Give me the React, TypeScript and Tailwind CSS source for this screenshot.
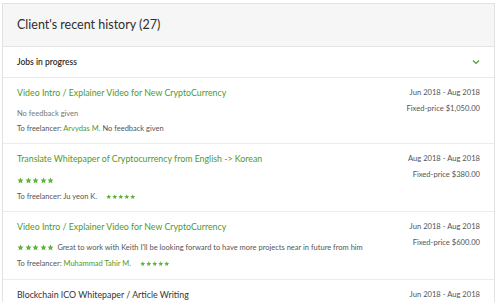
import React from "react";

const Star = ({ s }: { s: number }) => (
  <svg width={s} height={s} viewBox="0 0 24 24" className="shrink-0">
    <path
      d="M12 1.5l3.1 6.9 7.4.7-5.6 5 1.7 7.4L12 17.7l-6.6 3.8 1.7-7.4-5.6-5 7.4-.7z"
      fill="#5fb33b"
    />
  </svg>
);

const Stars = ({ s, gap }: { s: number; gap: number }) => (
  <div className="flex items-center" style={{ gap }}>
    {[0, 1, 2, 3, 4].map((i) => (
      <Star key={i} s={s} />
    ))}
  </div>
);

const Right = ({ date, price }: { date: string; price: string }) => (
  <div className="flex flex-col items-end shrink-0 text-[7.6px] text-[#555] leading-[15px] gap-[1px]">
    <div>{date}</div>
    <div>{price}</div>
  </div>
);

export default function App() {
  return (
    <div
      className="w-[500px] h-[302px] bg-white overflow-hidden pl-[2px] pt-[3px]"
      style={{ fontFamily: "Lato, 'Open Sans', sans-serif" }}
    >
      <div className="w-[493px] border border-[#e2e2e2] bg-white">
        <div className="h-[43px] bg-[#f6f6f6] flex items-center px-[14px] border-b border-[#e4e4e4]">
          <span className="text-[12.5px] text-[#2e2e2e]">Client's recent history (27)</span>
        </div>
        <div className="h-[31px] flex items-center justify-between pl-[14px] pr-[14px] border-b border-[#e8e8e8]">
          <span className="text-[8.5px] font-semibold text-[#2a2a2a]">Jobs in progress</span>
          <svg width="8" height="6" viewBox="0 0 8 6">
            <path d="M1 1.5l3 3 3-3" stroke="#4a9d2a" strokeWidth="1.2" fill="none" />
          </svg>
        </div>

        {/* Row 1 */}
        <div className="h-[66px] flex justify-between pl-[14px] pr-[14px] pt-[7px] border-b border-[#ececec]">
          <div className="flex flex-col">
            <div className="text-[8.8px] text-[#4e9a2a] leading-[15px]">
              Video Intro / Explainer Video for New CryptoCurrency
            </div>
            <div className="text-[7.5px] text-[#777] mt-[7px] leading-[13px]">No feedback given</div>
            <div className="text-[7.5px] text-[#555] mt-[2px] leading-[13px]">
              To freelancer: <span className="text-[#4e9a2a]">Arvydas M.</span> No feedback given
            </div>
          </div>
          <Right date="Jun 2018 - Aug 2018" price="Fixed-price $1,050.00" />
        </div>

        {/* Row 2 */}
        <div className="h-[68px] flex justify-between pl-[14px] pr-[14px] pt-[7px] border-b border-[#ececec]">
          <div className="flex flex-col">
            <div className="text-[8.8px] text-[#4e9a2a] leading-[15px]">
              Translate Whitepaper of Cryptocurrency from English -&gt; Korean
            </div>
            <div className="mt-[8px] h-[13px] flex items-center">
              <Stars s={7} gap={0.6} />
            </div>
            <div className="text-[7.5px] text-[#555] mt-[3px] leading-[13px] flex items-center">
              <span>To freelancer: Ju yeon K.</span>
              <span className="ml-[9px]">
                <Stars s={5.5} gap={0.4} />
              </span>
            </div>
          </div>
          <Right date="Aug 2018 - Aug 2018" price="Fixed-price $380.00" />
        </div>

        {/* Row 3 */}
        <div className="h-[68px] flex justify-between pl-[14px] pr-[14px] pt-[7px] border-b border-[#ececec]">
          <div className="flex flex-col">
            <div className="text-[8.8px] text-[#4e9a2a] leading-[15px]">
              Video Intro / Explainer Video for New CryptoCurrency
            </div>
            <div className="mt-[7px] h-[13px] flex items-center text-[7.5px] text-[#555]">
              <Stars s={7} gap={0.6} />
              <span className="ml-[3px]">
                Great to work with Keith I'll be looking forward to have more projects near in future from him
              </span>
            </div>
            <div className="text-[7.5px] text-[#555] mt-[3px] leading-[13px] flex items-center">
              <span>
                To freelancer: <span className="text-[#4e9a2a]">Muhammad Tahir M.</span>
              </span>
              <span className="ml-[9px]">
                <Stars s={5.5} gap={0.4} />
              </span>
            </div>
          </div>
          <Right date="Jun 2018 - Aug 2018" price="Fixed-price $600.00" />
        </div>

        {/* Row 4 */}
        <div className="h-[40px] flex justify-between pl-[14px] pr-[14px] pt-[7px]">
          <div className="text-[8.8px] text-[#333] leading-[15px]">
            Blockchain ICO Whitepaper / Article Writing
          </div>
          <Right date="Jun 2018 - Aug 2018" price="" />
        </div>
      </div>
    </div>
  );
}
